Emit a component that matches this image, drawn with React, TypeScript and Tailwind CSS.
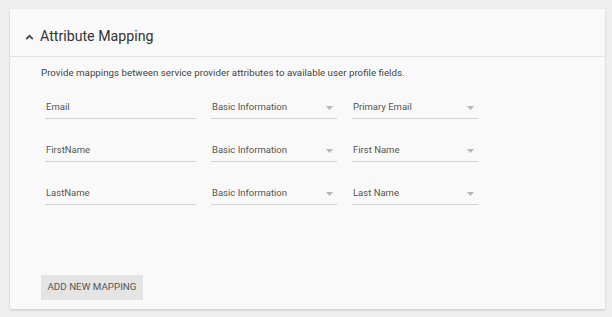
import React from "react";

interface MappingRow {
  attribute: string;
  category: string;
  field: string;
}

const rows: MappingRow[] = [
  { attribute: "Email", category: "Basic Information", field: "Primary Email" },
  { attribute: "FirstName", category: "Basic Information", field: "First Name" },
  { attribute: "LastName", category: "Basic Information", field: "Last Name" },
];

const Caret = () => (
  <svg width="7" height="4" viewBox="0 0 7 4" className="shrink-0">
    <path d="M0 0 L7 0 L3.5 4 Z" fill="#b5b5b5" />
  </svg>
);

const SelectField: React.FC<{ value: string }> = ({ value }) => (
  <div className="flex h-[22px] w-[126px] items-center justify-between border-b border-[#d4d4d4] pr-[4px] pl-[1px]">
    <span className="text-[9.5px] text-[#555]">{value}</span>
    <Caret />
  </div>
);

const App: React.FC = () => {
  return (
    <div
      className="h-[317px] w-[612px] bg-[#efefef] pt-[9px] pl-[10px]"
      style={{ fontFamily: "Roboto, 'Liberation Sans', sans-serif" }}
    >
      <div className="flex h-[300px] w-[595px] flex-col bg-[#f9f9f9] shadow-[0_1px_2px_rgba(0,0,0,0.18)]">
        {/* Header */}
        <div className="flex h-[48px] items-center gap-[6px] border-b border-[#e4e4e4] pt-[9px] pl-[15px]">
          <svg width="9" height="6" viewBox="0 0 9 6">
            <path d="M1.2 5.2 L4.5 1.8 L7.8 5.2" stroke="#444" strokeWidth="1.7" fill="none" />
          </svg>
          <span className="text-[14.2px] text-[#333]">Attribute Mapping</span>
        </div>

        {/* Body */}
        <div className="flex flex-1 flex-col px-[31px] pt-[10px] pb-[9px]">
          <p className="text-[9.75px] leading-[12px] text-[#444]">
            Provide mappings between service provider attributes to available user profile fields.
          </p>

          <div className="mt-[18px] flex flex-col gap-[21px] pl-[4px]">
            {rows.map((row) => (
              <div key={row.attribute} className="flex gap-[15px]">
                <div className="flex h-[22px] w-[151px] items-center border-b border-[#d4d4d4] pl-[1px]">
                  <span className="text-[9.5px] text-[#555]">{row.attribute}</span>
                </div>
                <SelectField value={row.category} />
                <SelectField value={row.field} />
              </div>
            ))}
          </div>

          <button className="mt-auto flex h-[25px] w-[102px] items-center justify-center bg-[#e4e4e4] text-[9.8px] uppercase text-[#555]">
            Add New Mapping
          </button>
        </div>
      </div>
    </div>
  );
};

export default App;
